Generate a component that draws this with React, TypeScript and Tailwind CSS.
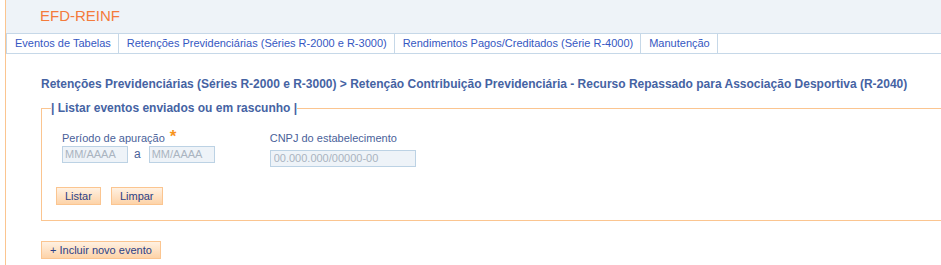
import React from 'react';

const tabs = [
  'Eventos de Tabelas',
  'Retenções Previdenciárias (Séries R-2000 e R-3000)',
  'Rendimentos Pagos/Creditados (Série R-4000)',
  'Manutenção',
];

function OrangeButton({ children }: { children: React.ReactNode }) {
  return (
    <button className="h-[18px] border border-[#fbc590] bg-gradient-to-b from-[#fff1e2] to-[#fdd3a8] px-[8px] text-[11px] leading-[16px] text-[#2c3f86]">
      {children}
    </button>
  );
}

export default function App() {
  return (
    <div className="h-[265px] w-[941px] overflow-hidden bg-white pl-[5px] font-['Liberation_Sans',Arial,sans-serif]">
      <div className="h-full border-l border-[#fbc590]">
        {/* Header */}
        <div className="flex h-[33px] items-center bg-[#eef3f8] pl-[34px]">
          <span className="text-[15px] text-[#f47b3c]">EFD-REINF</span>
        </div>

        {/* Tabs */}
        <div className="flex h-[21px] border-y border-[#c6d8e8] bg-white">
          {tabs.map((t) => (
            <div
              key={t}
              className="flex items-center border-r border-[#c6d8e8] pl-[8px] pr-[7px] text-[11px] text-[#3557c2] first:border-l"
            >
              {t}
            </div>
          ))}
        </div>

        {/* Content */}
        <div className="pl-[35px] pt-[23px]">
          <h2 className="text-[12px] font-bold leading-[14px] text-[#4563a3]">
            Retenções Previdenciárias (Séries R-2000 e R-3000) &gt; Retenção Contribuição Previdenciária - Recurso
            Repassado para Associação Desportiva (R-2040)
          </h2>

          <fieldset className="mt-[10px] w-[920px] border border-[#fbc590] pb-[15px]">
            <legend className="ml-[9px] text-[12px] font-bold leading-[15px] text-[#4563a3]">
              | Listar eventos enviados ou em rascunho |
            </legend>

            <div className="mt-[15px] flex gap-[55px] pl-[20px]">
              <div>
                <div className="flex items-start text-[11px] leading-[14px] text-[#4a5f9a]">
                  Período de apuração
                  <span className="ml-[5px] -mt-[2px] text-[17px] font-bold leading-[16px] text-[#f7941d]">*</span>
                </div>
                <div className="flex items-center">
                  <input
                    placeholder="MM/AAAA"
                    className="h-[17px] w-[66px] border border-[#bcd2e4] bg-[#eef3f8] px-[2px] text-[11px] text-[#555] placeholder:text-[#aab4c0]"
                  />
                  <span className="ml-[6px] mr-[8px] text-[12px] text-[#4a5f9a]">a</span>
                  <input
                    placeholder="MM/AAAA"
                    className="h-[17px] w-[66px] border border-[#bcd2e4] bg-[#eef3f8] px-[2px] text-[11px] text-[#555] placeholder:text-[#aab4c0]"
                  />
                </div>
              </div>
              <div>
                <div className="text-[11px] leading-[14px] text-[#4a5f9a]">CNPJ do estabelecimento</div>
                <input
                  placeholder="00.000.000/00000-00"
                  className="h-[17px] w-[146px] border border-[#bcd2e4] bg-[#eef3f8] px-[3px] text-[11px] text-[#555] placeholder:text-[#aab4c0]"
                />
              </div>
            </div>

            <div className="mt-[18px] flex gap-[10px] pl-[14px]">
              <OrangeButton>Listar</OrangeButton>
              <OrangeButton>Limpar</OrangeButton>
            </div>
          </fieldset>

          <div className="mt-[20px] flex">
            <OrangeButton>+ Incluir novo evento</OrangeButton>
          </div>
        </div>
      </div>
    </div>
  );
}
